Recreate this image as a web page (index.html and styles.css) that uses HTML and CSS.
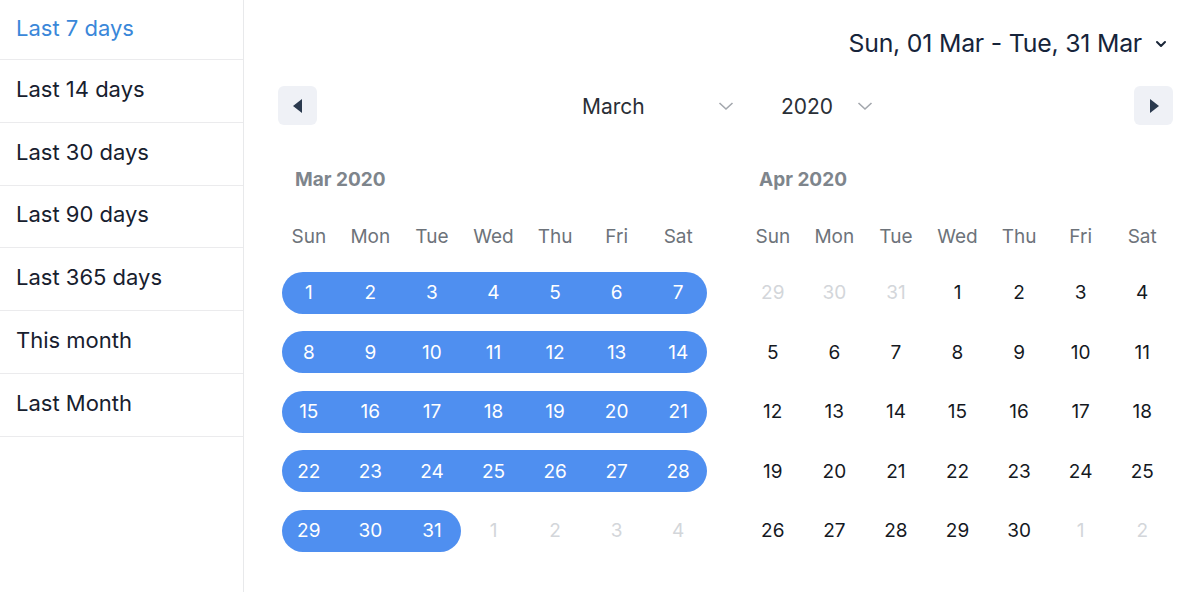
FILE: index.html
```html
<!DOCTYPE html>
<html>
<head>
<meta charset="utf-8">
<link rel="stylesheet" href="styles.css">
</head>
<body>
<div class="app">
  <aside class="sidebar">
    <div class="preset active">Last 7 days</div>
    <div class="preset">Last 14 days</div>
    <div class="preset">Last 30 days</div>
    <div class="preset">Last 90 days</div>
    <div class="preset">Last 365 days</div>
    <div class="preset">This month</div>
    <div class="preset">Last Month</div>
  </aside>
  <main class="main">
    <div class="header">
      <span class="range">Sun, 01 Mar - Tue, 31 Mar</span>
      <svg class="range-chev" width="12" height="8" viewBox="0 0 12 8"><path d="M2 2 L6 6 L10 2" fill="none" stroke="#1a2638" stroke-width="2" stroke-linecap="round" stroke-linejoin="round"/></svg>
    </div>
    <div class="nav">
      <button class="navbtn"><svg width="14" height="16" viewBox="0 0 14 16"><path d="M11 1 L2 8 L11 15 Z" fill="#2b3a4e"/></svg></button>
      <div class="selects">
        <div class="select month"><span>March</span><svg width="16" height="10" viewBox="0 0 16 10"><path d="M1.5 2 L8 8 L14.5 2" fill="none" stroke="#a3a7ad" stroke-width="1.6"/></svg></div>
        <div class="select year"><span>2020</span><svg width="16" height="10" viewBox="0 0 16 10"><path d="M1.5 2 L8 8 L14.5 2" fill="none" stroke="#a3a7ad" stroke-width="1.6"/></svg></div>
      </div>
      <button class="navbtn"><svg width="14" height="16" viewBox="0 0 14 16"><path d="M3 1 L12 8 L3 15 Z" fill="#2b3a4e"/></svg></button>
    </div>
    <div class="months">
      <section class="month-cal">
        <div class="title">Mar 2020</div>
        <div class="grid">
          <div class="wd">Sun</div><div class="wd">Mon</div><div class="wd">Tue</div><div class="wd">Wed</div><div class="wd">Thu</div><div class="wd">Fri</div><div class="wd">Sat</div>
          <div class="d in start">1</div><div class="d in">2</div><div class="d in">3</div><div class="d in">4</div><div class="d in">5</div><div class="d in">6</div><div class="d in end">7</div>
          <div class="d in start">8</div><div class="d in">9</div><div class="d in">10</div><div class="d in">11</div><div class="d in">12</div><div class="d in">13</div><div class="d in end">14</div>
          <div class="d in start">15</div><div class="d in">16</div><div class="d in">17</div><div class="d in">18</div><div class="d in">19</div><div class="d in">20</div><div class="d in end">21</div>
          <div class="d in start">22</div><div class="d in">23</div><div class="d in">24</div><div class="d in">25</div><div class="d in">26</div><div class="d in">27</div><div class="d in end">28</div>
          <div class="d in start">29</div><div class="d in">30</div><div class="d in end">31</div><div class="d off">1</div><div class="d off">2</div><div class="d off">3</div><div class="d off">4</div>
        </div>
      </section>
      <section class="month-cal">
        <div class="title">Apr 2020</div>
        <div class="grid">
          <div class="wd">Sun</div><div class="wd">Mon</div><div class="wd">Tue</div><div class="wd">Wed</div><div class="wd">Thu</div><div class="wd">Fri</div><div class="wd">Sat</div>
          <div class="d off">29</div><div class="d off">30</div><div class="d off">31</div><div class="d">1</div><div class="d">2</div><div class="d">3</div><div class="d">4</div>
          <div class="d">5</div><div class="d">6</div><div class="d">7</div><div class="d">8</div><div class="d">9</div><div class="d">10</div><div class="d">11</div>
          <div class="d">12</div><div class="d">13</div><div class="d">14</div><div class="d">15</div><div class="d">16</div><div class="d">17</div><div class="d">18</div>
          <div class="d">19</div><div class="d">20</div><div class="d">21</div><div class="d">22</div><div class="d">23</div><div class="d">24</div><div class="d">25</div>
          <div class="d">26</div><div class="d">27</div><div class="d">28</div><div class="d">29</div><div class="d">30</div><div class="d off">1</div><div class="d off">2</div>
        </div>
      </section>
    </div>
  </main>
</div>
</body>
</html>
```

FILE: styles.css
```css
* { box-sizing: border-box; }
html, body { margin: 0; padding: 0; background: #fff; }
body {
  font-family: Inter, "Noto Sans", "Liberation Sans", sans-serif;
  width: 1200px;
  height: 592px;
  overflow: hidden;
}
.app { display: flex; height: 592px; }
.sidebar {
  width: 244px;
  flex: none;
  border-right: 1px solid #e8e9eb;
}
.preset {
  height: 62.8px;
  display: flex;
  align-items: center;
  padding: 0 16px 4px;
  font-size: 22px;
  color: #17202e;
  border-bottom: 1.5px solid #ebebed;
}
.preset:first-child { height: 60px; padding-bottom: 4px; }
.preset.active { color: #3a87d9; }
.main {
  flex: 1;
  padding: 26px 27px 0 34px;
}
.header {
  height: 34px;
  display: flex;
  justify-content: flex-end;
  align-items: center;
  gap: 13px;
  padding-right: 6px;
}
.range { font-size: 24.8px; color: #16243a; letter-spacing: -0.2px; }
.range-chev { margin-top: 2px; }
.nav {
  margin-top: 26px;
  display: flex;
  align-items: center;
  justify-content: space-between;
  height: 39px;
}
.navbtn {
  width: 39px; height: 39px;
  border: none;
  border-radius: 6px;
  background: #eff1f6;
  display: flex; align-items: center; justify-content: center;
  padding: 0;
}
.selects { display: flex; align-items: center; gap: 47px; margin-left: 4px; }
.select {
  display: flex; align-items: center; justify-content: space-between;
  font-size: 21px; color: #2a2f36;
}
.select.month { width: 152px; }
.select.year { width: 92px; }
.select span { padding-top: 1px; }
.months {
  margin-top: 42px;
  display: flex;
  gap: 33px;
}
.month-cal { width: 431px; }
.title {
  font-size: 19px;
  font-weight: 700;
  color: #7e858c;
  line-height: 24px;
  padding-left: 17px;
  margin-top: 1px;
}
.grid {
  margin-top: 27px;
  display: grid;
  grid-template-columns: repeat(7, 1fr);
  grid-template-rows: 35px repeat(5, 42px);
  row-gap: 17.5px;
}
.wd {
  display: flex; align-items: center; justify-content: center;
  font-size: 19px; color: #6d737a;
}
.d {
  display: flex; align-items: center; justify-content: center;
  font-size: 19px; color: #15191f;
}
.d.off { color: #d3d6da; }
.d.in { background: #4f8ff0; color: #fff; }
.d.start { border-radius: 21px 0 0 21px; margin-left: 4px; padding-right: 4px; }
.d.end { border-radius: 0 21px 21px 0; margin-right: 2px; padding-left: 2px; }
```
